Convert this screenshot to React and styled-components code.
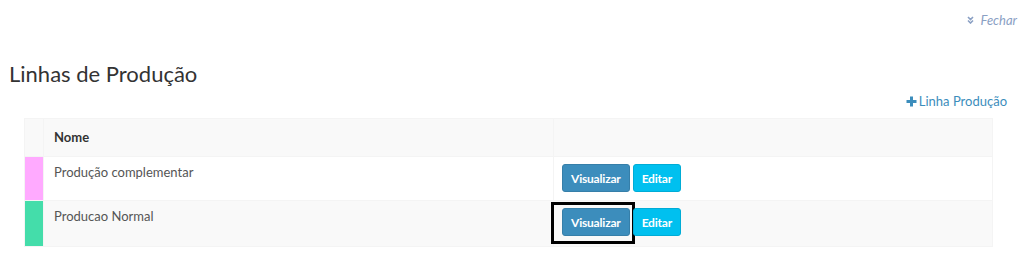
import { createGlobalStyle, styled } from 'styled-components'

const GlobalStyle = createGlobalStyle`
    body {
        margin: 0;
        background: #fff;
        font-family: Lato, "Open Sans", sans-serif;
        color: #333;
    }
`

const rows = [
    { id: 1, name: 'Produção complementar', color: '#ffaaff' },
    { id: 2, name: 'Producao Normal', color: '#44ddaa', focused: true },
]

const App = () => {
    return (
        <>
            <GlobalStyle />
            <Page>
                <TopBar>
                    <CloseLink href="#">
                        <svg width="7" height="8" viewBox="0 0 7 8">
                            <path d="M1 1 L3.5 3.5 L6 1 M1 4.5 L3.5 7 L6 4.5" fill="none" stroke="currentColor" strokeWidth="1.6" />
                        </svg>
                        Fechar
                    </CloseLink>
                </TopBar>

                <Title>Linhas de Produção</Title>

                <ActionBar>
                    <AddLink href="#">
                        <svg width="11" height="11" viewBox="0 0 11 11">
                            <path d="M5.5 0.5 V10.5 M0.5 5.5 H10.5" stroke="currentColor" strokeWidth="3" />
                        </svg>
                        Linha Produção
                    </AddLink>
                </ActionBar>

                <Table>
                    <tbody>
                        <Row $striped>
                            <ColorCell />
                            <HeadCell>Nome</HeadCell>
                            <HeadCell />
                        </Row>
                        {rows.map((row, i) => (
                            <Row key={row.id} $striped={i % 2 === 1}>
                                <ColorCell style={{ background: row.color }} />
                                <NameCell>{row.name}</NameCell>
                                <ActionCell $focused={row.focused}>
                                    <Button $variant="primary" $focused={row.focused}>Visualizar</Button>
                                    <Button $variant="info">Editar</Button>
                                </ActionCell>
                            </Row>
                        ))}
                    </tbody>
                </Table>
            </Page>
        </>
    )
}

const Page = styled.div`
    width: 1024px;
    height: 276px;
    box-sizing: border-box;
    padding: 0 7px 0 9px;
`

const TopBar = styled.div`
    display: flex;
    justify-content: flex-end;
    padding-top: 10px;
    height: 20px;
`

const CloseLink = styled.a`
    display: flex;
    align-items: center;
    gap: 7px;
    font-size: 13px;
    font-style: italic;
    color: #8aa0c4;
    text-decoration: none;
`

const Title = styled.h3`
    margin: 30px 0 0;
    font-size: 22px;
    font-weight: 400;
    line-height: 28px;
    color: #333;
`

const ActionBar = styled.div`
    display: flex;
    justify-content: flex-end;
    padding: 4px 10px 0 0;
    height: 18px;
`

const AddLink = styled.a`
    display: flex;
    align-items: center;
    gap: 2px;
    font-size: 13px;
    color: #3c8dbc;
    text-decoration: none;
`

const Table = styled.table`
    margin: 8px 0 0 15px;
    width: 969px;
    border-collapse: collapse;
    font-size: 13px;
`

const Row = styled.tr`
    background: ${p => (p.$striped ? '#f9f9f9' : '#fff')};
`

const ColorCell = styled.td`
    width: 18px;
    padding: 0;
    border: 1px solid #f4f4f4;
`

const HeadCell = styled.td`
    height: 20px;
    padding: 8px 10px 9px;
    border: 1px solid #f4f4f4;
    font-weight: 700;
    color: #333;

    &:nth-child(2) {
        width: 489px;
    }
`

const NameCell = styled.td`
    vertical-align: top;
    padding: 6px 10px 8px;
    border: 1px solid #f4f4f4;
    line-height: 18px;
    color: #555;
`

const ActionCell = styled.td`
    padding: 7px 8px ${p => (p.$focused ? '10px' : '8px')};
    border: 1px solid #f4f4f4;
    vertical-align: top;
`

const Button = styled.button`
    position: relative;
    height: 28px;
    padding: 0 8px;
    margin-right: 3px;
    border: 1px solid ${p => (p.$variant === 'primary' ? '#367fa9' : '#00acd6')};
    border-radius: 3px;
    background: ${p => (p.$variant === 'primary' ? '#3c8dbc' : '#00c0ef')};
    color: #fff;
    font-family: Lato, sans-serif;
    font-size: 12px;
    font-weight: 700;
    letter-spacing: -0.2px;

    ${p => p.$focused && `
        &::after {
            content: '';
            position: absolute;
            left: -12px;
            right: -6px;
            top: -7px;
            bottom: -9px;
            border: 3px solid #000;
        }
    `}
`

export default App
